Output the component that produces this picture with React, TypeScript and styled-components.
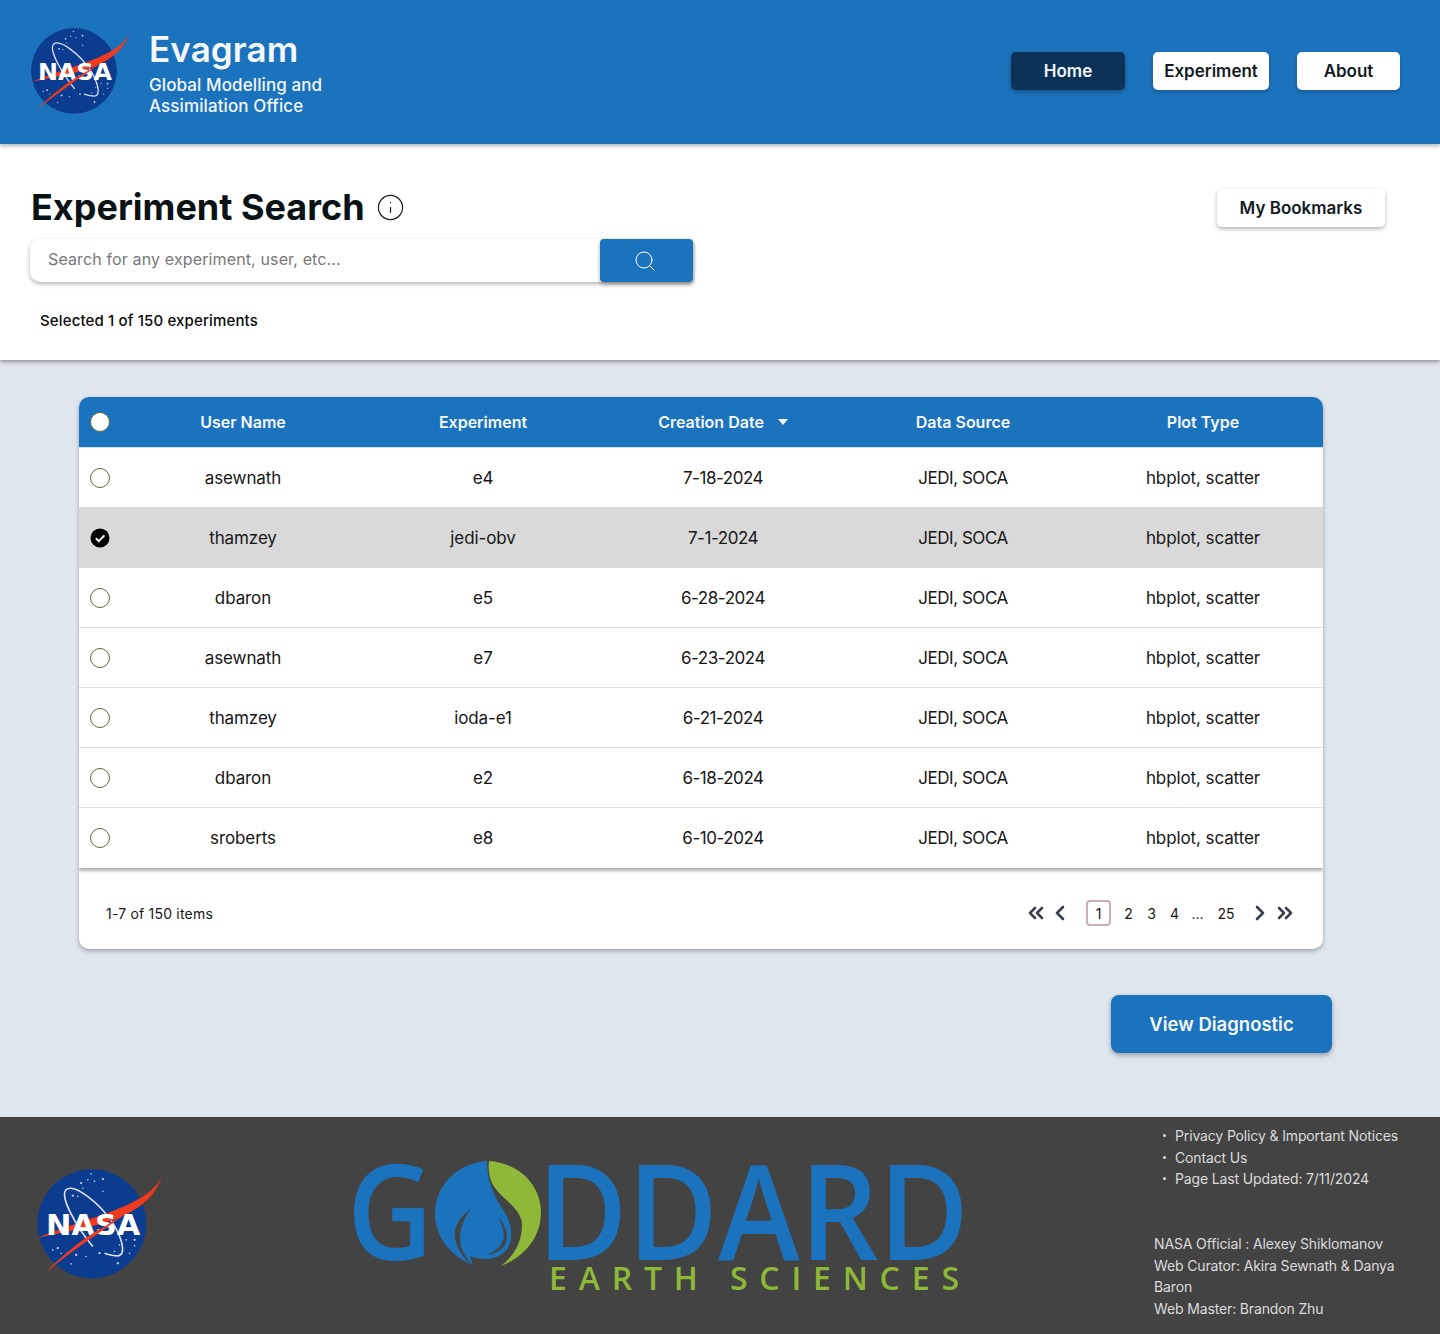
import React from "react";
import styled, { createGlobalStyle } from "styled-components";
import { ChevronLeft, ChevronRight, ChevronsLeft, ChevronsRight, Info, Search } from "lucide-react";

const Global = createGlobalStyle`
  html, body { margin: 0; padding: 0; background: #dfe6ee; }
  body { font-family: Inter, "Noto Sans", "Liberation Sans", sans-serif; color: #0b1215; }
  * { box-sizing: border-box; }
`;

const Page = styled.div`width: 1440px; height: 1334px; display: flex; flex-direction: column; overflow: hidden;`;

const Header = styled.header`
  position: relative; z-index: 2; flex: 0 0 144px; display: flex; align-items: center;
  background: #1c73bd; padding: 0 40px 2px 30px; box-shadow: 0 2px 4px rgba(0,0,0,.3);
`;
const Brand = styled.div`display: flex; align-items: center; flex: 1;`;
const BrandMark = styled.div`margin-top: -2px;`;
const BrandText = styled.div`margin: 4px 0 0 19px; color: #f4f7fb;`;
const BrandTitle = styled.div`font-size: 35px; font-weight: 600; line-height: 40px; letter-spacing: .1px; margin-bottom: 6px;`;
const BrandSub = styled.div`font-size: 17px; font-weight: 500; line-height: 21px; letter-spacing: .1px;`;
const Nav = styled.nav`display: flex; gap: 28px;`;
const NavButton = styled.button<{ $active?: boolean; $w: number }>`
  width: ${p => p.$w}px; height: 38px; border: 0; border-radius: 5px; padding: 0;
  font: 600 17px Inter, sans-serif;
  background: ${p => (p.$active ? "#0c3357" : "#fff")};
  color: ${p => (p.$active ? "#f4f7fb" : "#141a1f")};
  box-shadow: ${p => (p.$active ? "0 2px 5px rgba(0,0,0,.3)" : "0 2px 4px rgba(0,0,0,.22)")};
`;

const SearchSection = styled.section`
  position: relative; z-index: 1; flex: 0 0 216px; background: #fff; padding: 43px 55px 0 30px;
  box-shadow: 0 2px 4px rgba(0,0,0,.35);
`;
const TitleRow = styled.div`display: flex; align-items: flex-start; justify-content: space-between;`;
const TitleGroup = styled.div`display: flex; align-items: center; gap: 11px; height: 40px;`;
const Title = styled.h1`margin: 0 0 0 1px; font-size: 36px; font-weight: 700; line-height: 40px; color: #0b1215;`;
const InfoIcon = styled(Info)`color: #1a1a1a;`;
const Bookmarks = styled.button`
  width: 168px; height: 38px; margin-top: 2px; border: 0; border-radius: 5px; background: #fff; padding: 0;
  font: 600 17px Inter, sans-serif; color: #141a1f; box-shadow: 0 2px 4px rgba(0,0,0,.3);
`;
const SearchBar = styled.div`
  width: 663px; height: 43px; margin-top: 12px; display: flex; background: #fff; border-radius: 10px 4px 4px 10px;
  box-shadow: 0 2px 4px rgba(0,0,0,.3);
`;
const SearchInput = styled.input`
  flex: 1; min-width: 0; border: 0; outline: 0; background: transparent; padding: 0 0 3px 18px;
  font: 400 16px Inter, sans-serif; letter-spacing: .13px; color: #777;
  &::placeholder { color: #777; opacity: 1; }
`;
const SearchButton = styled.button`
  flex: 0 0 93px; border: 0; border-radius: 4px; background: #1c73bd; color: #fff; display: flex;
  align-items: center; justify-content: center; padding: 0 4px 0 0; box-shadow: 0 2px 4px rgba(0,0,0,.35);
`;
const Selected = styled.div`margin: 30px 0 0 10px; font-size: 15px; font-weight: 500; line-height: 18px; letter-spacing: .14px; color: #0a0a0a;`;

const Main = styled.main`flex: 1; display: flex; flex-direction: column; padding: 37px 108px 0 79px;`;
const Card = styled.div`
  width: 1244px; background: #fff; border-radius: 10px; box-shadow: 0 2px 4px rgba(0,0,0,.3); overflow: hidden;
`;
const Row = styled.div<{ $selected?: boolean }>`
  display: grid; grid-template-columns: 44px repeat(5, 240px); align-items: center;
  height: 60px; background: ${p => (p.$selected ? "#d9d9d9" : "#fff")};
  color: #161616; font-size: 17px; font-weight: 400; letter-spacing: -.1px;
  border-bottom: 1px solid #dedede;
  &:last-child { border-bottom: 0; }
`;
const HeadRow = styled.div`
  display: grid; grid-template-columns: 44px repeat(5, 240px); align-items: center;
  height: 51px; padding-bottom: 1px; background: #1c73bd; color: #f4f7fb; font-size: 16px; font-weight: 600;
  border-bottom: 1px solid #cfe0f0;
`;
const Rows = styled.div`box-shadow: 0 3px 3px rgba(0,0,0,.3); position: relative;`;
const Cell = styled.div<{ $tight?: boolean }>`
  text-align: center; display: flex; align-items: center; justify-content: center;
  letter-spacing: ${p => (p.$tight ? "-.45px" : "inherit")};
`;
const RadioCell = styled.div`display: flex; justify-content: flex-end; padding-right: 13px;`;
const Radio = styled.span<{ $fill?: boolean }>`
  width: 20px; height: 20px; border-radius: 50%; border: 1px solid #59663f; background: ${p => (p.$fill ? "#fff" : "transparent")}; display: block;
`;
const CheckedRadio = styled.svg`width: 20px; height: 20px; display: block;`;
const Caret = styled.span`
  width: 0; height: 0; margin-left: 14px; border-left: 5px solid transparent; border-right: 5px solid transparent;
  border-top: 6px solid #f4f7fb;
`;

const Pager = styled.div`
  height: 81px; display: flex; align-items: center; justify-content: space-between; padding: 9px 26px 0 27px;
  font-size: 14px; color: #161616;
`;
const Items = styled.div`font-size: 14px; font-weight: 400; letter-spacing: .2px;`;
const PageList = styled.div`display: flex; align-items: center; color: #3b3f50;`;
const PageCell = styled.span<{ $w?: number }>`
  width: ${p => p.$w ?? 23}px; text-align: center; font-size: 14px; color: #161616;
`;
const CurrentPage = styled.span`
  width: 25px; height: 26px; margin: 0 6px 0 14px; border: 2px solid #c7aeb8; border-radius: 4px; display: flex;
  align-items: center; justify-content: center; font-size: 14px; color: #161616;
`;
const PagerNext = styled(ChevronRight)`margin-left: 5px;`;
const PagerLast = styled(ChevronsRight)`margin-left: 1px;`;

const Actions = styled.div`display: flex; justify-content: flex-end; margin-top: 46px;`;
const Diagnostic = styled.button`
  width: 221px; height: 58px; border: 0; border-radius: 8px; background: #1c73bd; color: #f6f8fb; padding: 0;
  font: 600 18.5px Inter, sans-serif; box-shadow: 0 2px 5px rgba(0,0,0,.35);
`;

const Footer = styled.footer`
  flex: 0 0 217px; background: #434343; display: flex; position: relative; padding-left: 36px; color: #dcdcdc;
`;
const FooterMark = styled.div`margin-top: 51px;`;
const GoddardMark = styled.div`margin: 41px 0 0 189px;`;
const FooterInfo = styled.div`margin-left: auto; width: 286px; padding: 8px 20px 0 0; font-size: 14px; line-height: 21.7px; letter-spacing: -.14px;`;
const Links = styled.ul`list-style: none; margin: 0 0 43px; padding: 0 0 0 9px;`;
const LinkItem = styled.li`
  display: block; height: 21.7px; position: relative; padding-left: 12px;
  &::before { content: ""; position: absolute; left: 0; top: 9px; width: 3px; height: 3px; border-radius: 50%; background: #dcdcdc; }
`;
const Credit = styled.div``;
const LogoSvg = styled.svg`overflow: visible; display: block;`;

const NasaLogo = ({ width }: { width: number }) => {
  const stars = [[185,130],[205,120],[225,125],[250,118],[215,102],[250,155],[160,168],[175,170],[190,145],[115,325],[100,330],[125,340],[170,345],[155,372],[200,350],[240,340],[285,335],[320,300],[345,300],[345,318],[330,340],[295,370],[300,315]];
  return (
    <LogoSvg width={width} height={width * 330 / 380} viewBox="50 85 380 330" aria-label="NASA">
      <circle cx="217" cy="252" r="163" fill="#0c3c90" />
      {stars.map(([x, y], i) => <circle key={i} cx={x} cy={y} r={i % 3 ? 2.4 : 3.4} fill="#c7d3e8" />)}
      <path d="M220 320 C170 260 120 170 140 150 C165 130 240 190 280 250 C310 300 320 345 295 348 C285 348 270 345 255 340" fill="none" stroke="#d9e0ee" strokeWidth="5" />
      <path d="M425 112 C400 170 310 205 205 240 C150 258 90 280 50 295 C100 283 170 272 235 255 C325 232 405 185 425 112Z" fill="#f03a1d" />
      <text x="80" y="285" textLength="282" lengthAdjust="spacingAndGlyphs" fontFamily="'DejaVu Sans', sans-serif" fontWeight="700" fontSize="86" fill="#fff">NASA</text>
      <path d="M78 398 C130 345 190 295 255 260 C290 240 325 215 352 190 C320 225 280 250 240 278 C185 315 125 360 78 398Z" fill="#f03a1d" />
    </LogoSvg>
  );
};

const GoddardLogo = () => (
  <LogoSvg width="612" height="136" viewBox="0 0 612 136" aria-label="Goddard Earth Sciences">
    <g fill="#1c73bd" fontFamily="'Open Sans', sans-serif" fontSize="133" fontWeight="600">
      <text x="-5" y="102" textLength="86" lengthAdjust="spacingAndGlyphs">G</text>
      <text x="185" y="102" textLength="432" lengthAdjust="spacingAndGlyphs">DDARD</text>
    </g>
    <path d="M135 3 C135 20 140 35 150 50 C157 60 160 70 159 80 C158 92 148 101 135 101 C128 101 122 100 118 98 L121 107 C98 98 83 78 83 56 C83 27 106 5 135 3Z" fill="#1c73bd" />
    <path d="M118.6 51 C106 60 100 72 104 84 C107 94 113 102 121 107 C112 98 108 90 108 80 C108 70 112 60 118.6 51Z" fill="#434343" />
    <path d="M146 59 C152 66 155 72 155 79 C155 88 146 96 135 97 C144 93 151 87 152 78 C152 71 149 65 146 59Z" fill="#434343" />
    <path d="M137 3 C168 5 189 28 189 54 C189 80 172 99 149 108 C162 98 170 84 170 67 C170 50 150 42 141 27 C137 20 136 10 137 3Z" fill="#8fb738" />
    <text x="197" y="132" textLength="410" fontFamily="'Open Sans', sans-serif" fontWeight="600" fontSize="32" fill="#8fb738">EARTH SCIENCES</text>
  </LogoSvg>
);

const rows = [
  ["asewnath", "e4", "7-18-2024"],
  ["thamzey", "jedi-obv", "7-1-2024"],
  ["dbaron", "e5", "6-28-2024"],
  ["asewnath", "e7", "6-23-2024"],
  ["thamzey", "ioda-e1", "6-21-2024"],
  ["dbaron", "e2", "6-18-2024"],
  ["sroberts", "e8", "6-10-2024"],
];

export default function App() {
  return (
    <Page>
      <Global />
      <Header>
        <Brand>
          <BrandMark><NasaLogo width={100} /></BrandMark>
          <BrandText>
            <BrandTitle>Evagram</BrandTitle>
            <BrandSub>Global Modelling and<br />Assimilation Office</BrandSub>
          </BrandText>
        </Brand>
        <Nav>
          <NavButton $active $w={114}>Home</NavButton>
          <NavButton $w={116}>Experiment</NavButton>
          <NavButton $w={103}>About</NavButton>
        </Nav>
      </Header>
      <SearchSection>
        <TitleRow>
          <TitleGroup>
            <Title>Experiment Search</Title>
            <InfoIcon size={29} strokeWidth={1} />
          </TitleGroup>
          <Bookmarks>My Bookmarks</Bookmarks>
        </TitleRow>
        <SearchBar>
          <SearchInput placeholder="Search for any experiment, user, etc..." />
          <SearchButton><Search size={24} strokeWidth={1} /></SearchButton>
        </SearchBar>
        <Selected>Selected 1 of 150 experiments</Selected>
      </SearchSection>
      <Main>
        <Card>
          <HeadRow>
            <RadioCell><Radio $fill /></RadioCell>
            <Cell>User Name</Cell>
            <Cell>Experiment</Cell>
            <Cell>Creation Date<Caret /></Cell>
            <Cell>Data Source</Cell>
            <Cell>Plot Type</Cell>
          </HeadRow>
          <Rows>
            {rows.map((r, i) => (
              <Row key={i} $selected={i === 1}>
                <RadioCell>
                  {i === 1 ? (
                    <CheckedRadio viewBox="0 0 20 20">
                      <circle cx="10" cy="10" r="9.5" fill="#000" />
                      <path d="M5.8 10.3 L8.8 13.2 L14.4 7.4" fill="none" stroke="#fff" strokeWidth="2" />
                    </CheckedRadio>
                  ) : <Radio />}
                </RadioCell>
                <Cell>{r[0]}</Cell>
                <Cell>{r[1]}</Cell>
                <Cell $tight>{r[2]}</Cell>
                <Cell $tight>JEDI, SOCA</Cell>
                <Cell>hbplot, scatter</Cell>
              </Row>
            ))}
          </Rows>
          <Pager>
            <Items>1-7 of 150 items</Items>
            <PageList>
              <ChevronsLeft size={24} strokeWidth={2.6} />
              <ChevronLeft size={24} strokeWidth={2.6} />
              <CurrentPage>1</CurrentPage>
              <PageCell>2</PageCell>
              <PageCell>3</PageCell>
              <PageCell>4</PageCell>
              <PageCell>...</PageCell>
              <PageCell $w={34}>25</PageCell>
              <PagerNext size={24} strokeWidth={2.6} />
              <PagerLast size={24} strokeWidth={2.6} />
            </PageList>
          </Pager>
        </Card>
        <Actions><Diagnostic>View Diagnostic</Diagnostic></Actions>
      </Main>
      <Footer>
        <FooterMark><NasaLogo width={127} /></FooterMark>
        <GoddardMark><GoddardLogo /></GoddardMark>
        <FooterInfo>
          <Links>
            <LinkItem>Privacy Policy &amp; Important Notices</LinkItem>
            <LinkItem>Contact Us</LinkItem>
            <LinkItem>Page Last Updated: 7/11/2024</LinkItem>
          </Links>
          <Credit>NASA Official : Alexey Shiklomanov</Credit>
          <Credit>Web Curator: Akira Sewnath &amp; Danya Baron</Credit>
          <Credit>Web Master: Brandon Zhu</Credit>
        </FooterInfo>
      </Footer>
    </Page>
  );
}
